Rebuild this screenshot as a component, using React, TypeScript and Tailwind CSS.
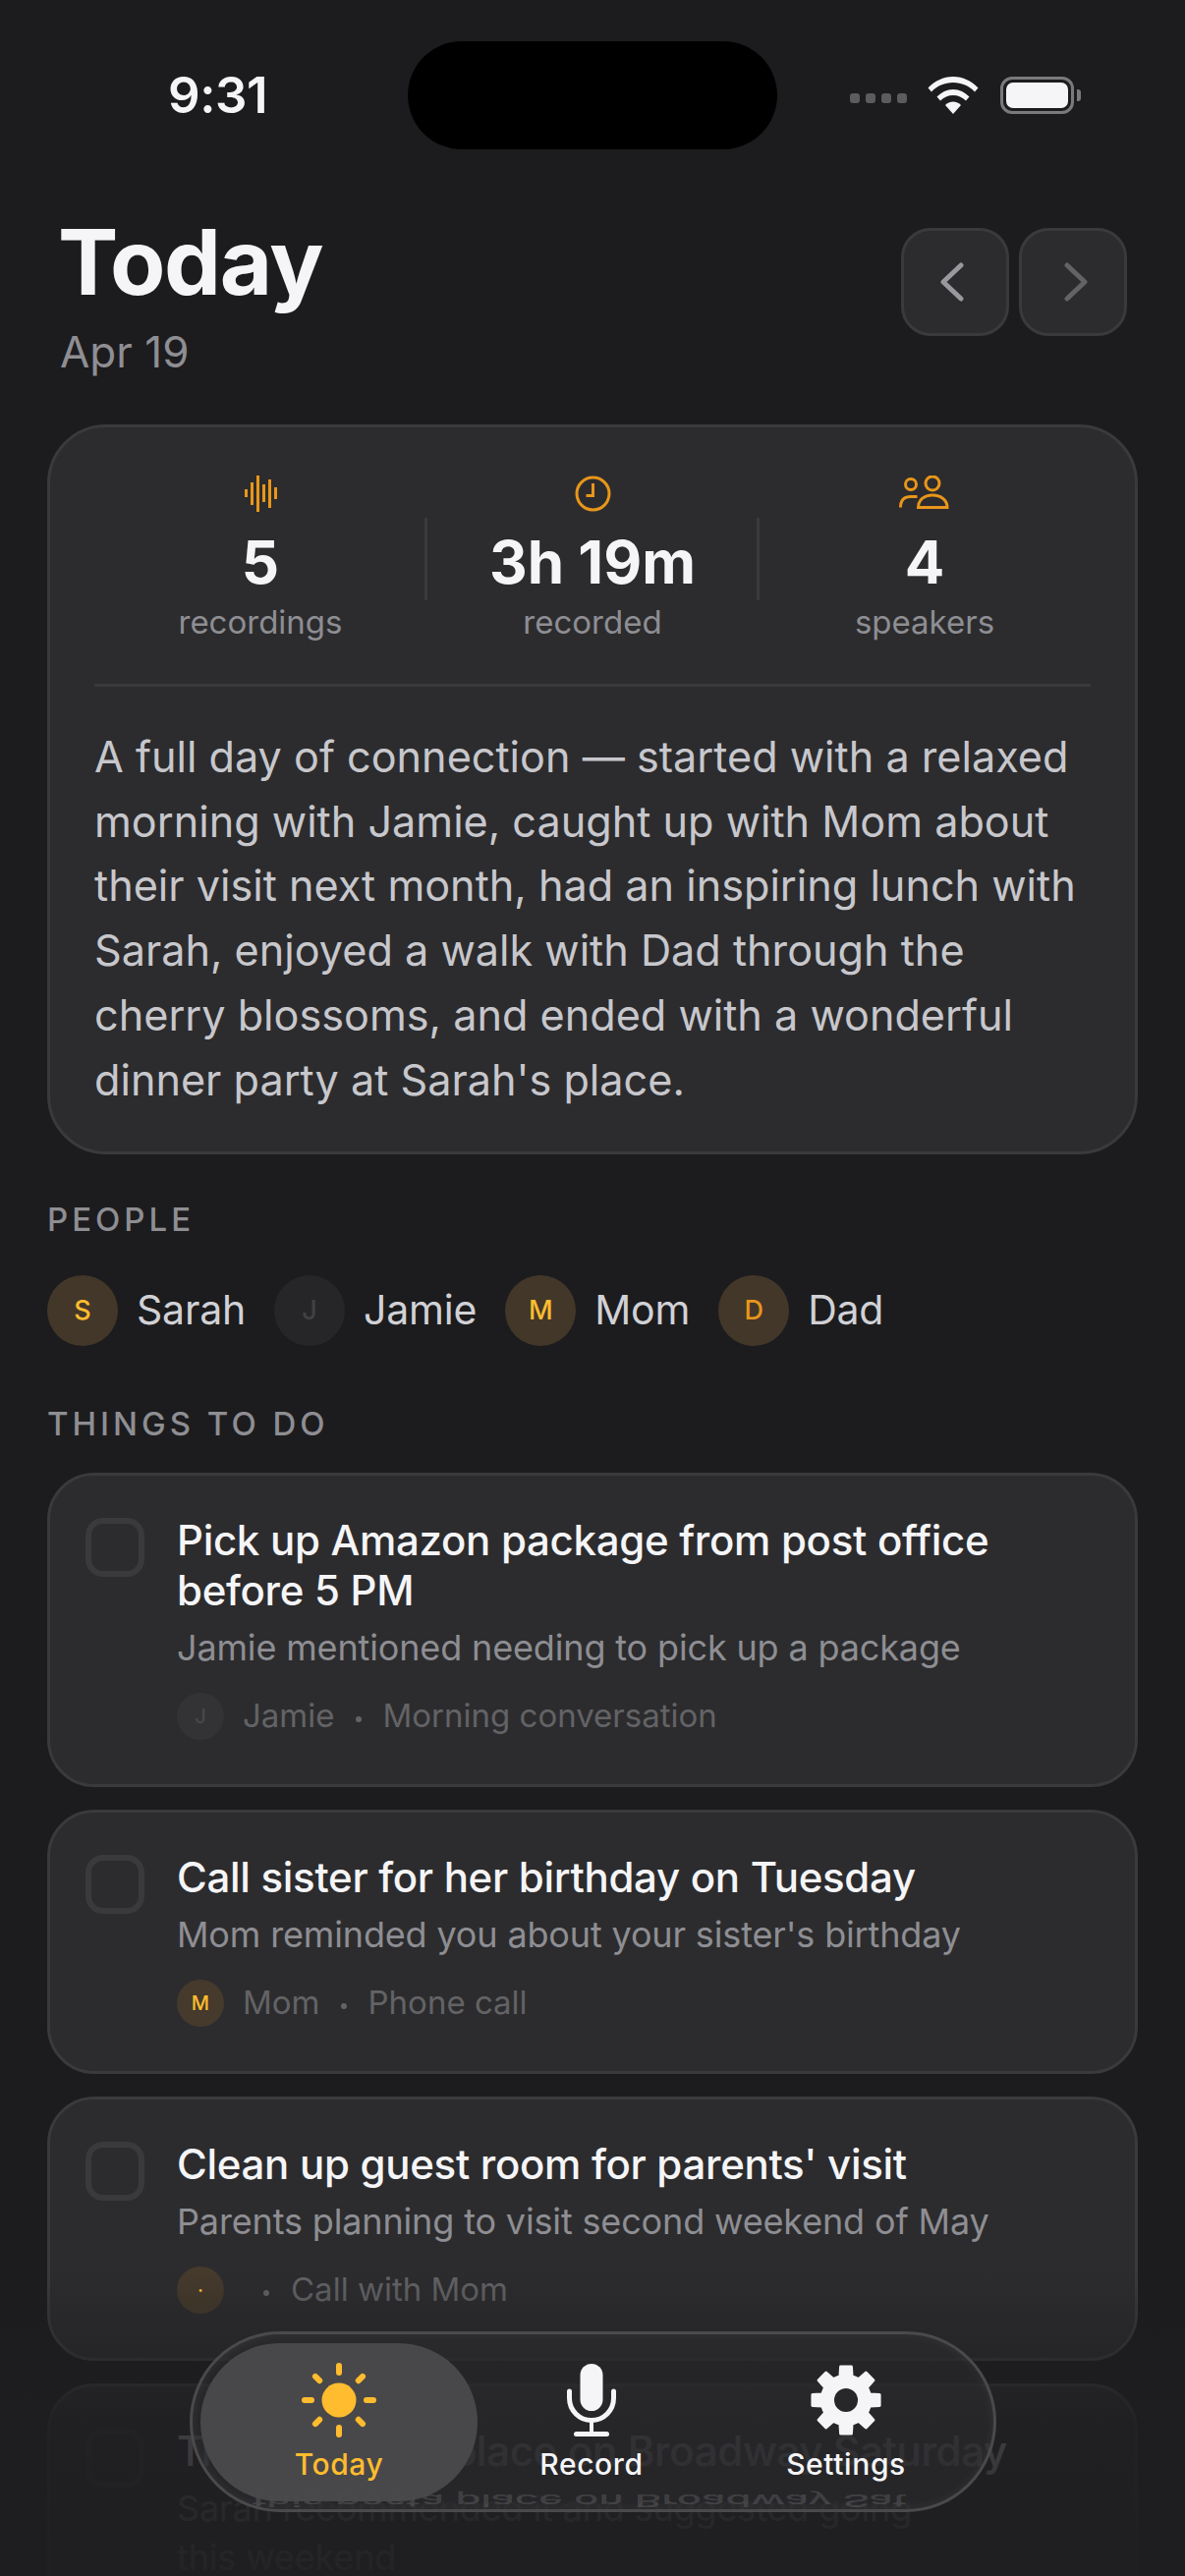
import type { ReactNode } from 'react';

const FONT = "font-['Inter','Noto_Sans',sans-serif]";

const STATS = [
  { value: '5', label: 'recordings', icon: <WaveIcon /> },
  { value: '3h 19m', label: 'recorded', icon: <ClockIcon /> },
  { value: '4', label: 'speakers', icon: <UsersIcon /> },
];

const PEOPLE = [
  { initial: 'S', name: 'Sarah', circle: 'bg-[#43372a]', text: 'text-[#febc2e]' },
  { initial: 'J', name: 'Jamie', circle: 'bg-[#262628]', text: 'text-[#414143]' },
  { initial: 'M', name: 'Mom', circle: 'bg-[#43372a]', text: 'text-[#febc2e]' },
  { initial: 'D', name: 'Dad', circle: 'bg-[#43372a]', text: 'text-[#e8961a]' },
];

const TODOS = [
  {
    title: 'Pick up Amazon package from post office before 5 PM',
    note: 'Jamie mentioned needing to pick up a package',
    initial: 'J',
    who: 'Jamie',
    source: 'Morning conversation',
    circle: 'bg-[#333335]',
    text: 'text-[#48484a]',
  },
  {
    title: 'Call sister for her birthday on Tuesday',
    note: "Mom reminded you about your sister's birthday",
    initial: 'M',
    who: 'Mom',
    source: 'Phone call',
    circle: 'bg-[#453a2c]',
    text: 'text-[#febc2e]',
  },
  {
    title: "Clean up guest room for parents' visit",
    note: 'Parents planning to visit second weekend of May',
    initial: '·',
    who: '',
    source: 'Call with Mom',
    circle: 'bg-[#453a2c]',
    text: 'text-[#febc2e]',
  },
  {
    title: 'Try this pasta place on Broadway Saturday',
    note: 'Sarah recommended it and suggested going\nthis weekend',
    initial: '',
    who: '',
    source: '',
    circle: '',
    text: '',
  },
];

function WaveIcon() {
  return (
    <svg width="33" height="37" viewBox="0 0 33 37" fill="#e8961a">
      <rect x="0" y="14" width="3" height="8" />
      <rect x="6" y="7" width="3" height="23" />
      <rect x="12" y="0" width="3" height="37" />
      <rect x="18" y="9" width="3" height="18" />
      <rect x="24" y="4" width="3" height="29" />
      <rect x="30" y="12" width="3" height="12" />
    </svg>
  );
}

function ClockIcon() {
  return (
    <svg width="37" height="37" viewBox="0 0 37 37" fill="none" stroke="#e8961a" strokeWidth="3">
      <circle cx="18.5" cy="18.5" r="16.5" />
      <path d="M18.5 8v12.5h-7" />
    </svg>
  );
}

function UsersIcon() {
  return (
    <svg width="52" height="37" viewBox="0 0 52 37" fill="none" stroke="#e8961a" strokeWidth="3">
      <circle cx="12" cy="9" r="5.5" />
      <circle cx="34" cy="8" r="7" />
      <path d="M1.5 32.5c0-7.5 4-11 10-11h7" />
      <path d="M19.5 32.5c0-7.5 6-12.500 14.500-12.500s15 5 15 12.500z" />
    </svg>
  );
}

function WifiIcon() {
  return (
    <svg width="52" height="38" viewBox="0 0 52 38" fill="#f5f5f7">
      <path d="M0.500 11.500C7 4.500 16 0 26 0s19 4.500 25.500 11.500l-3.500 4C42.500 9.500 34.500 6 26 6S9.500 9.500 4 15.500z" />
      <path d="M9.500 20.500C14 16 19.500 13 26 13s12 3 16.500 7.500l-3.500 4C35.500 21 31 19 26 19s-9.500 2-13 5.500z" />
      <path d="M18 29c2-2 5-3.500 8-3.500s6 1.500 8 3.500l-8 9z" />
    </svg>
  );
}

function SunIcon() {
  const rays = [0, 45, 90, 135, 180, 225, 270, 315];
  return (
    <svg width="76" height="76" viewBox="-38 -38 76 76" fill="#febc2e" stroke="#febc2e">
      <circle r="17.500" stroke="none" />
      {rays.map(angle => (
        <line
          key={angle}
          x1="0"
          y1="-28"
          x2="0"
          y2={angle % 90 === 0 ? -35 : -34}
          strokeWidth="6"
          strokeLinecap="round"
          transform={`rotate(${angle})`}
        />
      ))}
    </svg>
  );
}

function MicIcon() {
  return (
    <svg width="50" height="74" viewBox="0 0 50 74" fill="#f5f5f7">
      <rect x="13.500" y="0" width="23" height="48" rx="11.500" />
      <path d="M2.500 28v7a22.500 22.500 0 0 0 45 0v-7" fill="none" stroke="#f5f5f7" strokeWidth="5" strokeLinecap="round" />
      <rect x="23" y="58" width="4" height="12" />
      <rect x="7" y="69" width="36" height="5" rx="2.500" />
    </svg>
  );
}

function gearPath() {
  const point = (radius: number, deg: number) => {
    const rad = (deg * Math.PI) / 180;
    return `${(radius * Math.cos(rad)).toFixed(2)} ${(radius * Math.sin(rad)).toFixed(2)}`;
  };
  const segs: string[] = [];
  for (let i = 0; i < 8; i++) {
    const a = i * 45 - 90;
    segs.push(point(25, a - 14), point(34.5, a - 9), point(34.5, a + 9), point(25, a + 14));
  }
  const hole = 'M13.500 0A13.500 13.500 0 1 0 -13.500 0A13.500 13.500 0 1 0 13.500 0Z';
  return `M${segs.join('L')}Z${hole}`;
}

function GearIcon() {
  return (
    <svg width="74" height="74" viewBox="-37 -37 74 74">
      <path d={gearPath()} fill="#f5f5f7" fillRule="evenodd" stroke="#f5f5f7" strokeWidth="3" strokeLinejoin="round" />
    </svg>
  );
}

function SectionLabel({ children }: { children: ReactNode }) {
  return (
    <h2 className="text-[33px] leading-[40px] font-medium tracking-[4px] text-[#8e8e93]">{children}</h2>
  );
}

function NavButton({ dir }: { dir: 'prev' | 'next' }) {
  return (
    <button className="w-[110px] h-[110px] flex items-center justify-center bg-[#2c2c2e] border-[3px] border-[#3a3a3c] rounded-[30px]">
      <svg
        width="24"
        height="40"
        viewBox="0 0 24 40"
        fill="none"
        strokeWidth="5"
        strokeLinecap="round"
        strokeLinejoin="round"
        stroke={dir === 'prev' ? '#98989d' : '#636366'}
        className={dir === 'prev' ? '-ml-[6px]' : 'ml-[5px]'}
      >
        <path d={dir === 'prev' ? 'M21 3 3 20l18 17' : 'M3 3l18 17L3 37'} />
      </svg>
    </button>
  );
}

function TodoCard({ todo }: { todo: (typeof TODOS)[number] }) {
  return (
    <div className="flex bg-[#2c2c2e] border-[3px] border-[#3a3a3c] rounded-[48px] pl-[36px] pr-[60px] pt-[40px] pb-[45px]">
      <div className="w-[60px] h-[60px] shrink-0 border-[6px] border-[#3a3a3c] rounded-[18px] mt-[3px] mr-[33px]" />
      <div className="flex-1 min-w-0">
        <p className="text-[42px] leading-[51px] font-medium tracking-[-0.3px] text-[#f5f5f7]">{todo.title}</p>
        <p className="mt-[8px] text-[36px] leading-[50px] tracking-[-0.15px] text-[#8e8e93] whitespace-pre-line">{todo.note}</p>
        {todo.initial && (
          <div className="mt-[21px] h-[48px] flex items-center text-[33px] text-[#636366]">
            <span className={`w-[48px] h-[48px] rounded-full flex items-center justify-center text-[20px] font-medium ${todo.circle} ${todo.text}`}>
              {todo.initial}
            </span>
            <span className="ml-[19px]">{todo.who}</span>
            <span className="w-[6px] h-[6px] rounded-full bg-[#636366] ml-[21px] mr-[22px] mt-[6px]" />
            <span>{todo.source}</span>
          </div>
        )}
      </div>
    </div>
  );
}

function Tab({ label, width, active, icon }: { label: string; width: string; active?: boolean; icon: ReactNode }) {
  return (
    <div className={`${width} h-[161px] rounded-full flex flex-col items-center ${active ? 'bg-[#4a4a4c]/95' : ''}`}>
      <div className="h-[105px] pt-[12px] flex items-center justify-center">{icon}</div>
      <span className={`text-[30px] leading-[36px] font-medium tracking-[0.6px] ${active ? 'text-[#febc2e]' : 'text-[#f5f5f7]'}`}>
        {label}
      </span>
    </div>
  );
}

export default function App() {
  return (
    <div className={`relative w-[1206px] h-[2622px] overflow-hidden bg-[#1c1c1e] ${FONT}`}>
      {/* Status bar */}
      <div className="h-[152px] pt-[42px] flex items-center">
        <div className="w-[415px] pl-[28px] text-center text-[51px] font-semibold tracking-[-0.5px] text-[#f5f5f7]">9:31</div>
        <div className="w-[376px] h-[110px] rounded-full bg-black" />
        <div className="flex-1 flex items-center pl-[74px]">
          <div className="flex gap-[6px] self-end mb-[11px]">
            {[0, 1, 2, 3].map(i => (
              <span key={i} className="w-[10px] h-[10px] rounded-[3px] bg-[#5c5c5e]" />
            ))}
          </div>
          <div className="ml-[21px]">
            <WifiIcon />
          </div>
          <div className="ml-[22px] flex items-center">
            <div className="w-[75px] h-[38px] border-[3px] border-[#7a7a7c] rounded-[12px] p-[3px]">
              <div className="w-full h-full bg-[#f5f5f7] rounded-[7px]" />
            </div>
            <span className="ml-[3px] w-[4px] h-[12px] bg-[#7a7a7c] rounded-r-[3px]" />
          </div>
        </div>
      </div>

      {/* Header */}
      <div className="mt-[80px] pl-[61px] pr-[59px] flex justify-between items-start">
        <div>
          <h1 className="text-[92px] leading-[100px] font-bold tracking-[-1.3px] text-[#f5f5f7] -mt-[15px] -ml-[2px]">Today</h1>
          <p className="mt-[14px] text-[44px] leading-[54px] text-[#8e8e93]">Apr 19</p>
        </div>
        <div className="flex gap-[10px]">
          <NavButton dir="prev" />
          <NavButton dir="next" />
        </div>
      </div>

      {/* Day summary */}
      <section className="mx-[48px] mt-[47px] bg-[#2c2c2e] border-[3px] border-[#3a3a3c] rounded-[60px] px-[45px] pt-[49px] pb-[40px]">
        <div className="flex pb-[42px] border-b-[3px] border-[#3a3a3c]">
          {STATS.map((stat, i) => (
            <div key={stat.label} className="relative w-[338px] flex flex-col items-center">
              {i > 0 && <span className="absolute left-[-2px] top-[43px] w-[3px] h-[84px] bg-[#3a3a3c]" />}
              <div className="h-[37px] flex items-center">{stat.icon}</div>
              <div className="mt-[15px] text-[60px] leading-[72px] font-bold text-[#f5f5f7]">{stat.value}</div>
              <div className="mt-[4px] text-[33px] leading-[42px] text-[#8e8e93]">{stat.label}</div>
            </div>
          ))}
        </div>
        <p className="mt-[39px] text-[43.200px] leading-[65.700px] text-[#c7c7cc]">
          A full day of connection — started with a relaxed morning with Jamie, caught up with Mom about their visit next month, had an inspiring lunch with Sarah, enjoyed a walk with Dad through the cherry blossoms, and ended with a wonderful dinner party at Sarah's place.
        </p>
      </section>

      {/* People */}
      <section className="mx-[48px] mt-[46px]">
        <SectionLabel>PEOPLE</SectionLabel>
        <div className="mt-[37px] flex gap-[29px]">
          {PEOPLE.map(person => (
            <div key={person.name} className="flex items-center gap-[19px]">
              <span className={`w-[72px] h-[72px] rounded-full flex items-center justify-center text-[27px] font-medium ${person.circle} ${person.text}`}>
                {person.initial}
              </span>
              <span className="text-[41px] tracking-[-0.2px] text-[#d1d1d6]">{person.name}</span>
            </div>
          ))}
        </div>
      </section>

      {/* Todos */}
      <section className="mx-[48px] mt-[59px]">
        <SectionLabel>THINGS TO DO</SectionLabel>
        <div className="mt-[30px] flex flex-col gap-[23px]">
          {TODOS.map(todo => (
            <TodoCard key={todo.title} todo={todo} />
          ))}
        </div>
      </section>

      {/* Fade under the tab bar */}
      <div className="absolute left-0 right-0 bottom-0 h-[310px] bg-gradient-to-b from-[#1e1e20]/0 via-[#1e1e20]/85 to-[#1e1e20]/95" />

      {/* Floating tab bar */}
      <nav className="absolute left-[193px] bottom-[65px] w-[821px] h-[184px] rounded-full overflow-hidden bg-[#2c2c2e]/60 border-[3px] border-[#4a4a4c] shadow-[inset_0_0_12px_rgba(255,255,255,0.06)] flex items-center pl-[8px]">
        <span className="absolute left-[61px] bottom-[-12px] text-[42px] leading-[42px] font-medium whitespace-nowrap text-[#f5f5f7]/15 scale-y-[-0.4]">
          this pasta place on Broadway Sat
        </span>
        <div className="relative flex">
          <Tab label="Today" width="w-[282px]" active icon={<SunIcon />} />
          <Tab label="Record" width="w-[232px]" icon={<MicIcon />} />
          <Tab label="Settings" width="w-[286px]" icon={<GearIcon />} />
        </div>
      </nav>
    </div>
  );
}
